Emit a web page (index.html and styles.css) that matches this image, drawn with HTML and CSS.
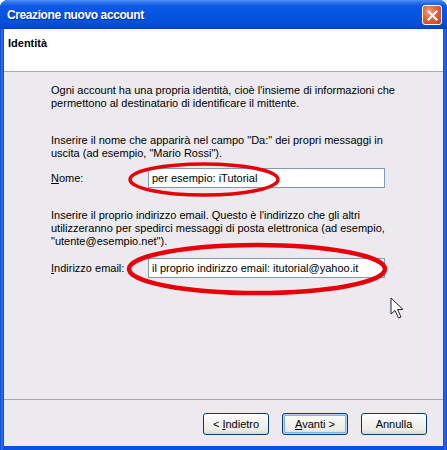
FILE: index.html
```html
<!DOCTYPE html>
<html lang="it">
<head>
    <meta charset="UTF-8">
    <title>Creazione nuovo account</title>
    <link rel="stylesheet" href="styles.css">
</head>
<body>
    <div class="window">
        <div class="titlebar">
            <span class="title">Creazione nuovo account</span>
            <span class="close-btn">
                <svg width="13" height="13" viewBox="0 0 13 13">
                    <path d="M2.5 2.5 L10.5 10.5 M10.5 2.5 L2.5 10.5" stroke="#fff" stroke-width="2" stroke-linecap="square"/>
                </svg>
            </span>
        </div>

        <div class="client">
            <div class="wizard-header">
                <h1>Identità</h1>
            </div>

            <div class="wizard-body">
                <p class="intro">Ogni account ha una propria identità, cioè l'insieme di informazioni che<br>permettono al destinatario di identificare il mittente.</p>

                <p class="hint">Inserire il nome che apparirà nel campo "Da:" dei propri messaggi in<br>uscita (ad esempio, "Mario Rossi").</p>
                <div class="field-row">
                    <label for="nome"><u>N</u>ome:</label>
                    <input type="text" id="nome" value="per esempio: iTutorial">
                </div>

                <p class="hint hint-email">Inserire il proprio indirizzo email. Questo è l'indirizzo che gli altri<br>utilizzeranno per spedirci messaggi di posta elettronica (ad esempio,<br>"utente@esempio.net").</p>
                <div class="field-row">
                    <label for="email"><u>I</u>ndirizzo email:</label>
                    <input type="text" id="email" value="il proprio indirizzo email: itutorial@yahoo.it">
                </div>
            </div>

            <div class="wizard-footer">
                <button class="xp-button">&lt; <u>I</u>ndietro</button>
                <button class="xp-button default"><u>A</u>vanti &gt;</button>
                <button class="xp-button">Annulla</button>
            </div>
        </div>

        <!-- Red hand-drawn marks and mouse pointer drawn over the dialog -->
        <svg class="annotations" width="447" height="450" viewBox="0 0 447 450">
            <ellipse cx="204" cy="179.5" rx="74" ry="15.5" fill="none" stroke="#e8000b" stroke-width="3.5"/>
            <ellipse cx="257" cy="269" rx="128" ry="24" fill="none" stroke="#e8000b" stroke-width="4.5"/>
            <path d="M391 298 L391 314 L395 310.5 L398.5 318 L401 317 L397.5 309.5 L403 309.5 Z" fill="#fff" stroke="#222" stroke-width="1" stroke-linejoin="round"/>
        </svg>
    </div>
</body>
</html>
```

FILE: styles.css
```css
html, body {
    margin: 0;
    padding: 0;
    background: #fff;
}

.window {
    position: relative;
    width: 447px;
    height: 450px;
    box-sizing: border-box;
    display: flex;
    flex-direction: column;
    background: linear-gradient(to right, #0a3fd0 0, #3d7cf0 2px, #0854e0 3px, #0854e0 444px, #3a6fe8 445px, #0a3fc8 447px);
    border-radius: 8px 8px 0 0;
    font-family: "Liberation Sans", Arial, sans-serif;
    font-size: 11px;
    color: #000;
}

/* title bar */
.titlebar {
    height: 29px;
    flex: none;
    display: flex;
    align-items: center;
    justify-content: space-between;
    padding: 0 4px 0 7px;
    border-radius: 8px 8px 0 0;
    background: linear-gradient(to bottom, #4a8ff8 0, #2b6ee8 3px, #0a5ae6 6px, #0554e2 14px, #0552da 22px, #0448cc 27px, #0340c0 29px);
}

.title {
    color: #fff;
    font-family: "Liberation Sans", Arial, sans-serif;
    font-weight: bold;
    font-size: 12px;
    letter-spacing: -0.4px;
    text-shadow: 1px 1px 0 #0a2a8a;
    margin-top: 1px;
}

.close-btn {
    width: 20px;
    height: 20px;
    margin-top: 1px;
    margin-right: 1px;
    box-sizing: border-box;
    border: 1px solid #fff;
    border-radius: 3px;
    background: radial-gradient(circle at 35% 30%, #f29b7c 0, #e2613e 45%, #c93f1c 100%);
    display: flex;
    align-items: center;
    justify-content: center;
}

/* dialog client area */
.client {
    flex: 1;
    display: flex;
    flex-direction: column;
    margin: 0 4px 4px 4px;
    background: #eceaee;
}

.wizard-header {
    height: 42px;
    flex: none;
    background: #fff;
    border-bottom: 1px solid #a9a7ac;
    padding: 0 0 0 4px;
}

.wizard-header h1 {
    margin: 8px 0 0 0;
    font-size: 11px;
    font-weight: bold;
}

.wizard-body {
    flex: 1;
    padding: 12px 0 0 47px;
    width: 334px;
}

.wizard-body p {
    margin: 0;
    line-height: 13px;
    white-space: nowrap;
}

.hint {
    margin-top: 24px !important;
}

.hint-email {
    margin-top: 21px !important;
}

.field-row {
    display: flex;
    align-items: center;
    margin-top: 8px;
}

.hint-email + .field-row {
    margin-top: 10px;
}

.field-row label {
    width: 97px;
    flex: none;
}

.field-row input {
    width: 237px;
    height: 20px;
    box-sizing: border-box;
    border: 1px solid #7f9db9;
    padding: 0 3px;
    margin: 0;
    font-family: "Liberation Sans", Arial, sans-serif;
    font-size: 11px;
    color: #000;
    background: #fff;
}

/* footer buttons */
.wizard-footer {
    flex: none;
    height: 47px;
    border-top: 1px solid #a9a7ac;
    display: flex;
    justify-content: flex-end;
    align-items: flex-start;
    gap: 13px;
    padding: 13px 16px 0 0;
    box-sizing: border-box;
}

.xp-button {
    width: 66px;
    height: 22px;
    box-sizing: border-box;
    border: 1px solid #003c74;
    border-radius: 3px;
    background: linear-gradient(to bottom, #ffffff 0, #f4f4f0 40%, #ecebe6 80%, #d8d6cf 100%);
    font-family: "Liberation Sans", Arial, sans-serif;
    font-size: 11px;
    color: #000;
    padding: 0;
}

.xp-button.default {
    box-shadow: inset 0 0 0 1px #bcd4f6, inset 0 0 0 2px #89ade4;
}

.annotations {
    position: absolute;
    left: 0;
    top: 0;
    pointer-events: none;
}
```
